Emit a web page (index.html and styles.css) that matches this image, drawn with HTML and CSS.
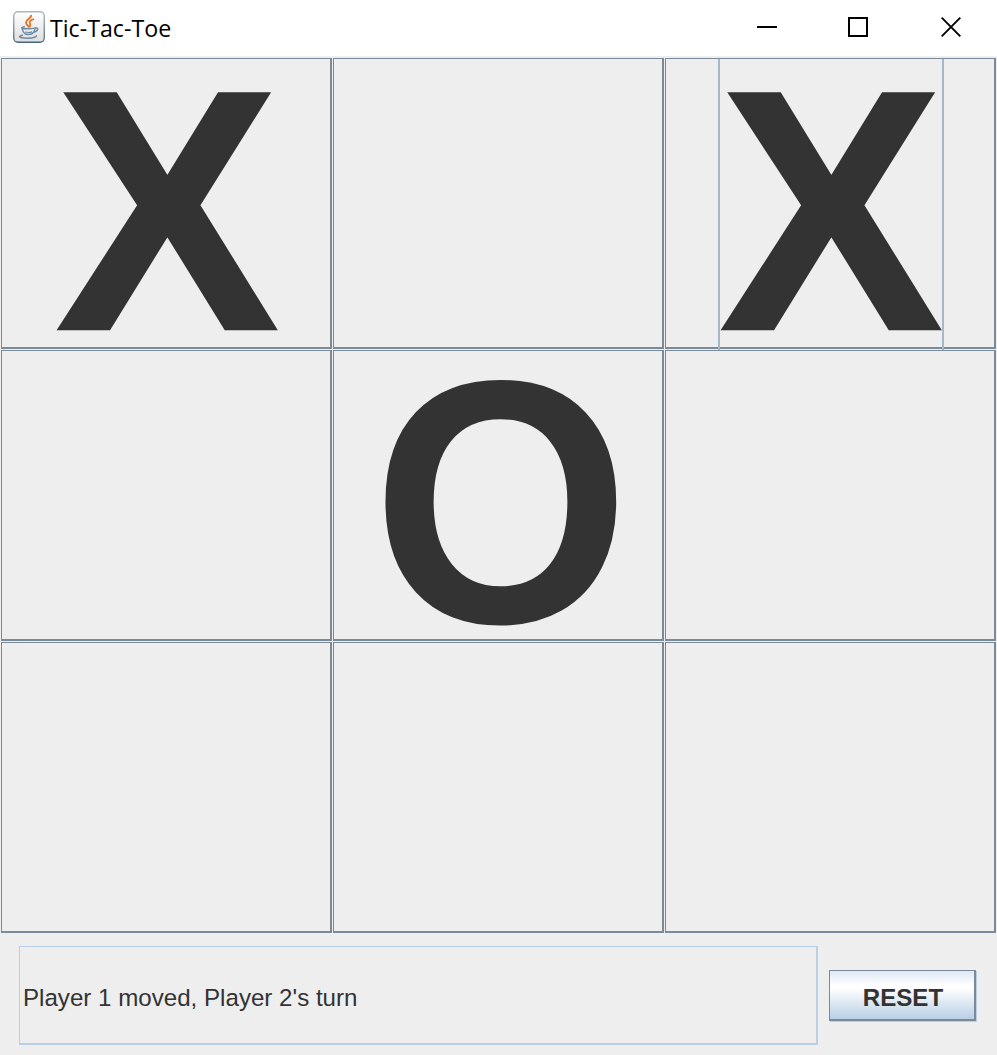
FILE: index.html
```html
<!DOCTYPE html>
<html lang="en">
<head>
<meta charset="utf-8">
<title>Tic-Tac-Toe</title>
<link rel="stylesheet" href="styles.css">
</head>
<body>
<div class="window">
  <header class="titlebar">
    <svg class="logo" width="32" height="32" viewBox="0 0 32 32" fill="none">
      <defs>
        <linearGradient id="tile" x1="0" y1="0" x2="0" y2="1"><stop offset="0" stop-color="#fff"/><stop offset="1" stop-color="#dedede"/></linearGradient>
        <linearGradient id="edge" x1="0" y1="0" x2="0" y2="1"><stop offset="0" stop-color="#a9b8c3"/><stop offset="1" stop-color="#48677e"/></linearGradient>
      </defs>
      <rect x=".75" y=".75" width="30.5" height="30.5" rx="4.2" fill="url(#tile)" stroke="url(#edge)" stroke-width="1.3"/>
      <path d="M18 4c1 3.200-5 4.500-5 7.500 0 2 2.300 3 3 5" stroke="#e8762c" stroke-width="2"/>
      <path d="M21 8c-3.500 1.300-5 2.300-4 4.200.8 1.300.3 2.600-.8 4" stroke="#e8762c" stroke-width="1.800"/>
      <g stroke="#6c8ca5" stroke-width="1.500">
        <path d="M12 15.800c-5 .8-4.500 2 3.500 2 3.500 0 6-.4 7.200-1.300"/>
        <path d="M9.300 18c.3 2.500 1.500 4 3.200 5 2 .7 4.500.6 6.500-.2 1.600-1 2.700-2.600 3-4.800"/>
        <path d="M22 17c4-.8 3.600 3.200-1.500 4.300"/>
        <path d="M10 24c-6 1.600-3.500 3.300 4.500 3.200 6-.1 10-1.400 8.500-3"/>
        <path d="M12 21c2 .5 5 .5 7-.1" stroke-width="1.100"/>
      </g>
    </svg>
    <span class="title">Tic-Tac-Toe</span>
    <div class="controls">
      <svg width="20" height="20" viewBox="0 0 20 20"><path d="M0 10h20" stroke="#000" stroke-width="2"/></svg>
      <svg width="20" height="20" viewBox="0 0 20 20"><rect x="1" y="1" width="18" height="18" fill="none" stroke="#000" stroke-width="2"/></svg>
      <svg class="close" width="20" height="20" viewBox="0 0 20 20"><path d="M.7.7l18.600 18.600M19.300.7L.7 19.300" stroke="#000" stroke-width="1.900"/></svg>
    </div>
  </header>
  <main class="board">
    <div class="cell"><span class="mark mark-x">X</span></div>
    <div class="cell"></div>
    <div class="cell focused"><span class="mark mark-x">X</span></div>
    <div class="cell"></div>
    <div class="cell"><span class="mark mark-o">O</span></div>
    <div class="cell"></div>
    <div class="cell"></div>
    <div class="cell"></div>
    <div class="cell"></div>
  </main>
  <footer class="footer">
    <div class="status">Player 1 moved, Player 2's turn</div>
    <button class="reset">RESET</button>
  </footer>
</div>
</body>
</html>
```
FILE: styles.css
```css
* { box-sizing: border-box; }
body { margin: 0; background: #eee; }
.window {
  width: 997px;
  height: 1055px;
  overflow: hidden;
  background: #eee;
  color: #333;
  font-family: "Liberation Sans", Arial, sans-serif;
}
.titlebar {
  display: flex;
  height: 56px;
  padding: 11px 36px 0 13px;
  background: #fff;
}
.title {
  margin: 1px 0 0 5px;
  color: #000;
  font: 23.2px/33px "Open Sans", "Noto Sans", sans-serif;
}
.controls {
  display: flex;
  gap: 71px;
  margin: 6px 0 0 auto;
}
.close { margin-left: 2px; }
.board {
  display: grid;
  grid-template-columns: repeat(3, 331px);
  grid-template-rows: repeat(3, 291px);
  gap: 1px;
  padding: 2px 0 0 1px;
}
.cell {
  position: relative;
  display: flex;
  justify-content: center;
  align-items: center;
  border: solid #7a8a99;
  border-width: 1px 2px 2px 1px;
}
.mark {
  font-size: 332px;
  font-weight: 700;
  line-height: 288px;
}
.mark-x {
  -webkit-text-stroke: 2px #333;
  transform: translate(1.5px, 7.5px) scale(1.009, 1.033);
}
.mark-o { transform: translate(3px, 7px) scaleY(1.045); }
.focused::after {
  content: "";
  position: absolute;
  top: 0;
  bottom: -3px;
  left: 52px;
  width: 222px;
  border: solid #a3b8cc;
  border-width: 0 2px;
}
.footer {
  display: flex;
  align-items: center;
  gap: 11px;
  padding: 13px 20px 0 19px;
}
.status {
  width: 799px;
  height: 99px;
  padding: 2px 0 0 3px;
  border: solid #b8cfe5;
  border-width: 1px 2px 2px 1px;
  font-size: 24.13px;
  line-height: 98px;
}
.reset {
  width: 147px;
  height: 51px;
  padding: 5px 0 0 2px;
  border: solid #7a8a99;
  border-width: 1px 2px 2px 1px;
  background: linear-gradient(#dde8f3 0, #fff 30%, #fff 36%, #b8cfe5 100%);
  box-shadow: 1px 1px 0 #b8cfe5;
  color: #333;
  font: 700 24.1px/44px "Liberation Sans", Arial, sans-serif;
}
```
